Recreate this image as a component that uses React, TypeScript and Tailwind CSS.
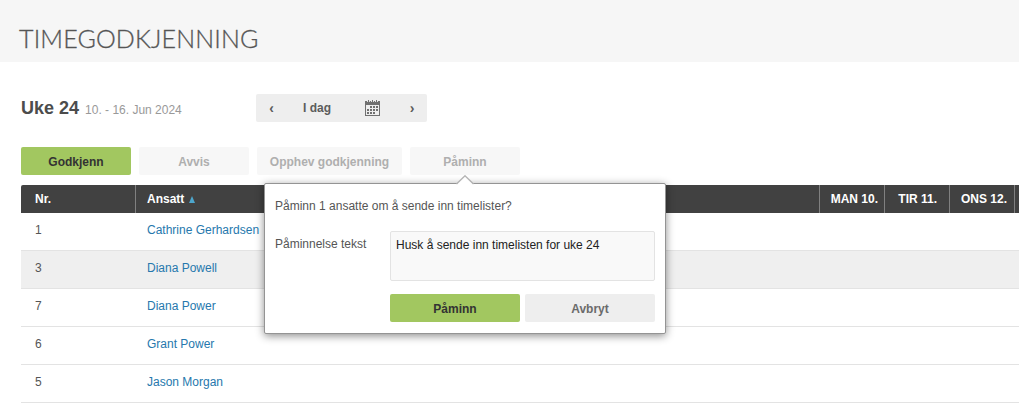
const employees = [
  { nr: 1, name: "Cathrine Gerhardsen" },
  { nr: 3, name: "Diana Powell" },
  { nr: 7, name: "Diana Power" },
  { nr: 6, name: "Grant Power" },
  { nr: 5, name: "Jason Morgan" },
];
const days = [
  { label: "MAN 10.", pad: "pr-[6px]" },
  { label: "TIR 11.", pad: "pr-[12px]" },
  { label: "ONS 12.", pad: "pr-[7px]" },
  { label: "", pad: "pr-[6px]" },
];

function CalendarIcon() {
  const dots = [
    [5, 6], [8, 6], [11, 6],
    [2, 9], [5, 9], [8, 9], [11, 9],
    [2, 12], [5, 12], [8, 12],
  ];
  return (
    <svg width="15" height="16" viewBox="0 0 15 16" fill="#707070" shapeRendering="crispEdges">
      <rect x="0" y="1" width="15" height="4" />
      <path d="M0 5h1v10h13V5h1v11H0z" />
      <path d="M3 0h1v1H3zM7 0h1v1H7zM11 0h1v1h-1z" />
      <path d="M2 1h1v1H2zM4 1h1v1H4zM6 1h1v1H6zM8 1h1v1H8zM10 1h1v1h-1zM12 1h1v1h-1z" fill="#e2e2e2" />
      {dots.map(([x, y]) => (
        <rect key={`${x}-${y}`} x={x} y={y} width="2" height="2" />
      ))}
    </svg>
  );
}

function Popup() {
  return (
    <div className="absolute left-[264px] top-[183px] h-[151px] w-[402px] rounded-[2px] border border-[#949494] bg-white pl-[10px] pr-[10px] pt-[14px] shadow-[0_2px_8px_rgba(0,0,0,0.45)]">
      <svg className="absolute left-[191px] top-[-9px]" width="18" height="10" viewBox="0 0 18 10">
        <path d="M0.5 9.5L9 1L17.5 9.5V10H0.5z" fill="#fff" />
        <path d="M0.5 9L9 0.8L17.5 9" fill="none" stroke="#b4b4b4" strokeWidth="1.4" />
      </svg>
      <p className="leading-4 text-[#555]">Påminn 1 ansatte om å sende inn timelister?</p>
      <div className="mt-[17px] flex">
        <label className="w-[115px] pt-[5px] leading-4 text-[#555]">Påminnelse tekst</label>
        <div className="h-[50px] w-[265px] rounded-[2px] border border-[#e3e3e3] bg-[#f9f9f9] px-[5px] pt-[5px] leading-4 text-[#222]">
          Husk å sende inn timelisten for uke 24
        </div>
      </div>
      <div className="ml-[115px] mt-[13px] flex gap-[5px] font-bold">
        <button className="h-7 w-[130px] rounded-[2px] bg-[#a2c760] pt-px text-[#333]">Påminn</button>
        <button className="h-7 w-[130px] rounded-[2px] bg-[#eee] pt-px text-[#6b6b6b]">Avbryt</button>
      </div>
    </div>
  );
}

export default function App() {
  return (
    <div className="relative h-[404px] w-[1019px] overflow-hidden bg-white font-['Liberation_Sans',Arial,sans-serif] text-[12px] text-[#555]">
      <header className="h-[62px] bg-[#f6f6f6] pl-[19px] pt-[22px]">
        <h1 className="font-['Lato',sans-serif] text-[25px] leading-[32px] font-light tracking-[0.15px] whitespace-nowrap text-[#555] [-webkit-text-stroke:0.3px_#555]">TIMEGODKJENNING</h1>
      </header>
      <div className="mt-8 flex h-7 pl-[21px]">
        <div className="flex w-[235px] items-baseline whitespace-nowrap">
          <h2 className="text-[18px] leading-7 font-bold text-[#4c4c4c]">Uke 24</h2>
          <span className="ml-[6px] text-[12px] text-[#999]">10. - 16. Jun 2024</span>
        </div>
        <div className="flex w-[171px] items-center rounded-[2px] bg-[#eee] font-bold text-[#5c5c5c]">
          <span className="w-[31px] text-center text-[14px]">‹</span>
          <span className="w-[60px] text-center">I dag</span>
          <span className="flex w-[51px] justify-center"><CalendarIcon /></span>
          <span className="w-[28px] text-center text-[14px]">›</span>
        </div>
      </div>
      <div className="mt-[25px] flex h-7 gap-2 pl-[21px] font-bold">
        <button className="w-[110px] rounded-[2px] bg-[#a2c760] pt-px text-[#333]">Godkjenn</button>
        <button className="w-[110px] rounded-[2px] bg-[#f7f7f7] pt-px text-[#afafaf]">Avvis</button>
        <button className="w-[145px] rounded-[2px] bg-[#f7f7f7] pt-px text-[#afafaf]">Opphev godkjenning</button>
        <button className="w-[110px] rounded-[2px] bg-[#f7f7f7] pt-px text-[#afafaf]">Påminn</button>
      </div>
      <div className="ml-[21px] mt-[10px] w-[1059px]">
        <div className="flex h-7 rounded-tl-[2px] bg-[#414141] leading-7 font-bold text-white">
          <div className="w-[115px] border-r border-[#808080] pl-[14px]">Nr.</div>
          <div className="flex w-[684px] items-center border-r border-[#808080] pl-[11px]">
            Ansatt
            <svg className="ml-[5px]" width="6" height="7" viewBox="0 0 6 7">
              <path d="M3 0L6 7H0z" fill="#4da6cc" />
            </svg>
          </div>
          {days.map((day, i) => (
            <div key={i} className={`w-[65px] border-r border-[#808080] text-right ${day.pad}`}>{day.label}</div>
          ))}
        </div>
        {employees.map((e) => (
          <div
            key={e.nr}
            className={e.nr === 3 ? "flex h-[38px] border-b border-[#e3e3e3] bg-[#efefef]" : "flex h-[38px] border-b border-[#e3e3e3]"}
          >
            <div className="w-[115px] pl-[14px] leading-[34px]">{e.nr}</div>
            <div className="pl-[11px] leading-[34px] text-[#2678ad]">{e.name}</div>
          </div>
        ))}
      </div>
      <Popup />
    </div>
  );
}
